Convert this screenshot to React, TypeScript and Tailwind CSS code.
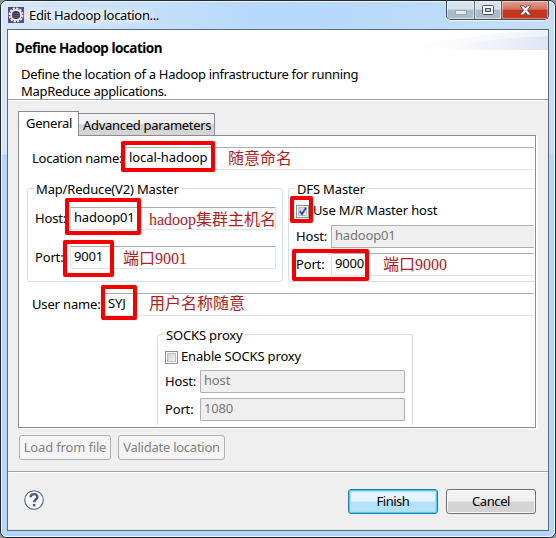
import { ReactNode } from "react";
import clsx from "clsx";

type FieldProps = {
  value: string;
  disabled?: boolean;
  open?: boolean;
  className?: string;
};

const Field = ({ value, disabled, open, className }: FieldProps) => (
  <div
    className={clsx(
      "flex h-[23px] items-center rounded-[1px] border pb-px pl-[3px] whitespace-nowrap",
      disabled
        ? "border-[#afafaf] bg-[#efefef] text-[#777]"
        : "border-[#e2e3ea] border-t-[#abadb3] bg-white",
      open && "border-r-0",
      className
    )}
  >
    {value}
  </div>
);

const Checkbox = ({ checked }: { checked?: boolean }) => (
  <div className="flex size-[13px] shrink-0 items-center justify-center border border-[#8e8f8f] bg-white">
    <div className="size-[9px] border border-[#b9bfc7] bg-linear-to-br from-[#cbd0d8] to-[#f6f6f6]">
      {checked && (
        <svg viewBox="0 0 9 9" className="-mt-px size-[9px] overflow-visible">
          <path
            d="M0.8 4.2 3 7 7 0.8"
            fill="none"
            stroke="#3b4c9b"
            strokeWidth="1.9"
          />
        </svg>
      )}
    </div>
  </div>
);

const Group = ({
  title,
  className,
  children,
}: {
  title: string;
  className?: string;
  children: ReactNode;
}) => (
  <div className={clsx("border border-[#d5dfe5]", className)}>
    <div className="-mt-[10px] ml-[6px] h-[20px] w-fit bg-white px-[2px] leading-[20px] whitespace-nowrap">
      {title}
    </div>
    {children}
  </div>
);

// red frame drawn over a field
const Mark = ({ className }: { className: string }) => (
  <div
    className={clsx(
      "absolute rounded-[2px] border-4 border-[#f40000] shadow-[0_0_1px_#ff7777]",
      className
    )}
  />
);

const Note = ({
  className,
  children,
}: {
  className: string;
  children: ReactNode;
}) => (
  <div
    className={clsx(
      "absolute font-['Liberation_Serif','Noto_Sans_CJK_SC',serif] text-[16px] leading-[20px] tracking-normal whitespace-nowrap text-[#b51c1c]",
      className
    )}
  >
    {children}
  </div>
);

const TitleBar = () => (
  <div className="flex h-[27px] shrink-0 items-start">
    <svg viewBox="0 0 16 16" className="mt-[5px] ml-[6px] size-4 shrink-0">
      <rect width="16" height="16" fill="#594a79" />
      <circle
        cx="8"
        cy="8"
        r="6.6"
        fill="none"
        stroke="#e8e8ec"
        strokeWidth="1.8"
        strokeDasharray="2.3 1.15"
      />
      <circle cx="8" cy="8" r="5" fill="#33304a" stroke="#eeeef2" strokeWidth="1.8" />
      <path d="M4.2 6.6h7.6M3.8 8.4h8.4M4.4 10.2h7.2" stroke="#6e6a8c" strokeWidth=".8" />
    </svg>
    <div className="mt-[3px] ml-[5px] leading-[20px] tracking-[-0.34px] [text-shadow:0_0_6px_white,0_0_8px_white,0_0_10px_white]">
      Edit Hadoop location...
    </div>
    <div className="-mt-px mr-[5px] ml-auto flex h-[19px] w-[103px] overflow-hidden rounded-b-[5px] border border-t-0 border-[#3f4a56] shadow-[0_1px_1px_#ffffffcc]">
      <div className="flex w-[28px] border-r border-[#66727f] bg-linear-to-b from-[#d6e2ec] from-45% to-[#aabccc] to-50% shadow-[inset_0_0_0_1px_#ffffff88]">
        <div className="mt-[9px] ml-[8px] h-[5px] w-[12px] rounded-[1px] border border-[#9aa5b1] bg-[#e6eaee]" />
      </div>
      <div className="flex w-[27px] border-r border-[#55616e] bg-linear-to-b from-[#d6e2ec] from-45% to-[#aabccc] to-50% shadow-[inset_0_0_0_1px_#ffffff88]">
        <svg viewBox="0 0 12 10" className="mt-[4px] ml-[7px] h-[10px] w-[12px]">
          <rect x=".5" y=".5" width="11" height="9" rx="1" fill="#f8f8f8" stroke="#4c5260" />
          <rect x="3.5" y="3.5" width="5" height="3" fill="#b8c6d4" stroke="#4c5260" />
        </svg>
      </div>
      <div className="flex flex-1 justify-center bg-linear-to-b from-[#e3a08f] via-[#d27460] via-45% to-[#c5371d] to-52% shadow-[inset_0_0_0_1px_#ffffff66]">
        <svg viewBox="0 0 13 11" className="mt-[4px] h-[11px] w-[13px]">
          <path
            d="M1 .8h3.6L6.5 3 8.4.8H12L8.5 5.2 12.2 10H8.5L6.5 7.4 4.5 10H.8l3.7-4.8z"
            fill="#fafafa"
            stroke="#5b4650"
            strokeWidth=".9"
          />
        </svg>
      </div>
    </div>
  </div>
);

const Header = () => (
  <div className="flex h-[70px] shrink-0 justify-between border-b border-[#a0a0a0] bg-white">
    <div className="flex flex-col whitespace-nowrap">
      <div className="mt-[8px] ml-[7px] text-[13.5px] leading-[20px] font-bold tracking-[-0.5px]">
        Define Hadoop location
      </div>
      <div className="mt-[8px] ml-[13px] leading-[17px] tracking-[-0.3px]">
        Define the location of a Hadoop infrastructure for running
        <br />
        MapReduce applications.
      </div>
    </div>
    <svg viewBox="0 0 150 20" className="-ml-[150px] h-[20px] w-[150px]">
      <defs>
        <linearGradient id="sweep">
          <stop offset=".1" stopColor="#fff" />
          <stop offset="1" stopColor="#dfe5f6" />
        </linearGradient>
      </defs>
      <path d="M0 20Q70 3 150 0V20z" fill="url(#sweep)" opacity=".5" />
      <path d="M30 20Q90 8 150 6V20z" fill="url(#sweep)" />
    </svg>
  </div>
);

const General = () => (
  <div className="relative flex h-[293px] w-[518px] flex-col overflow-hidden border border-[#898c95] bg-white shadow-[2px_1px_0_white]">
    <div className="mt-[11px] flex pr-px">
      <div className="w-[106px] shrink-0 pl-[13px] leading-[22px] tracking-[-0.25px] whitespace-nowrap">
        Location name:
      </div>
      <Field value="local-hadoop" open className="flex-1 tracking-[-0.08px]" />
    </div>
    <div className="mt-[18px] flex pr-px">
      <Group title="Map/Reduce(V2) Master" className="ml-[8px] h-[94px] w-[256px] rounded-[3px]">
        <div className="mt-[8px] flex">
          <div className="w-[42px] pl-[7px] leading-[22px]">Host:</div>
          <Field value="hadoop01" className="w-[206px]" />
        </div>
        <div className="mt-[16px] flex">
          <div className="w-[42px] pl-[7px] leading-[22px]">Port:</div>
          <Field value="9001" className="w-[206px]" />
        </div>
      </Group>
      <Group title="DFS Master" className="ml-[5px] h-[94px] flex-1 rounded-l-[3px] border-r-0">
        <div className="mt-[2px] ml-[7px] flex h-[20px] items-center gap-[4px]">
          <Checkbox checked />
          <span>Use M/R Master host</span>
        </div>
        <div className="mt-[4px] flex">
          <div className="w-[42px] pl-[7px] leading-[22px]">Host:</div>
          <Field value="hadoop01" disabled open className="flex-1" />
        </div>
        <div className="mt-[5px] flex">
          <div className="w-[42px] pl-[7px] leading-[22px]">Port:</div>
          <Field value="9000" open className="flex-1" />
        </div>
      </Group>
    </div>
    <div className="mt-[11px] flex pr-px">
      <div className="w-[85px] pl-[13px] leading-[22px]">User name:</div>
      <Field value="SYJ" open className="flex-1" />
    </div>
    <Group title="SOCKS proxy" className="mt-[18px] ml-[138px] h-[91px] w-[256px] rounded-t-[3px] border-b-0">
      <div className="mt-[2px] ml-[7px] flex h-[20px] items-center gap-[3px]">
        <Checkbox />
        <span>Enable SOCKS proxy</span>
      </div>
      <div className="mt-[3px] flex">
        <div className="w-[42px] pl-[7px] leading-[22px]">Host:</div>
        <Field value="host" disabled className="w-[205px]" />
      </div>
      <div className="mt-[5px] flex">
        <div className="w-[42px] pl-[7px] leading-[22px]">Port:</div>
        <Field value="1080" disabled className="w-[205px]" />
      </div>
    </Group>

    <Mark className="top-[5px] left-[102px] h-[31px] w-[94px]" />
    <Mark className="top-[62px] left-[46px] h-[37px] w-[76px]" />
    <Mark className="top-[104px] left-[44px] h-[37px] w-[51px]" />
    <Mark className="top-[60px] left-[271px] h-[27px] w-[23px]" />
    <Mark className="top-[113px] left-[273px] h-[32px] w-[77px]" />
    <Mark className="top-[149px] left-[82px] h-[35px] w-[36px]" />
    <Note className="top-[13px] left-[209px]">随意命名</Note>
    <Note className="top-[74px] left-[130px]">hadoop集群主机名</Note>
    <Note className="top-[113px] left-[104px]">端口9001</Note>
    <Note className="top-[119px] left-[364px]">端口9000</Note>
    <Note className="top-[158px] left-[130px]">用户名称随意</Note>
  </div>
);

const App = () => {
  return (
    <div className="h-[538px] w-[556px] bg-[#8b959c] font-['Noto_Sans',sans-serif] text-[13px] tracking-[-0.16px] text-black">
      <div className="flex h-full flex-col rounded-[7px] border border-[#232a35] bg-linear-to-b from-transparent from-[153px] to-[#b3d6fa] to-[154px] p-px shadow-[inset_0_0_0_1px_#f2f8ff]">
        <div className="-m-px flex flex-1 flex-col rounded-[6px] border border-[#eef6ff] bg-[linear-gradient(to_bottom,transparent_152px,#b3d6fa_153px),linear-gradient(to_right,#d6e7f8,#b5d8fb_50%,#c4def7)]">
          <TitleBar />
          <div className="mr-[5px] ml-[5px] flex h-[502px] flex-col border border-[#5c6b7a] bg-[#efefef]">
            <Header />
            <div className="flex h-[372px] shrink-0 flex-col border-t border-b border-t-white border-b-[#a0a0a0] pl-[10px]">
              <div className="relative z-10 mt-[10px] -mb-px flex items-end whitespace-nowrap">
                <div className="h-[25px] w-[61px] border border-b-0 border-[#898c95] bg-white pl-[7px] leading-[22px] tracking-[-0.25px]">
                  General
                </div>
                <div className="h-[23px] w-[136px] border border-l-0 border-[#898c95] bg-linear-to-b from-[#f2f2f2] from-45% to-[#d5d5d5] to-50% pl-[4px] leading-[22px] tracking-[-0.3px]">
                  Advanced parameters
                </div>
              </div>
              <General />
              <div className="mt-[7px] ml-px flex gap-[7px] text-[#838383]">
                <button className="h-[25px] w-[92px] rounded-[3px] border border-[#adb2b5] bg-[#f4f4f4] pt-px whitespace-nowrap">
                  Load from file
                </button>
                <button className="h-[25px] w-[107px] rounded-[3px] border border-[#adb2b5] bg-[#f4f4f4] pt-px tracking-[-0.25px] whitespace-nowrap">
                  Validate location
                </button>
              </div>
            </div>
            <div className="flex flex-1 items-start border-t border-white pt-[16px]">
              <svg viewBox="0 0 20 20" className="mt-px ml-[16px] size-5">
                <circle cx="10" cy="10" r="9.3" fill="#f5f7fa" stroke="#566580" strokeWidth="1.1" />
                <path
                  d="M6.6 7.2C6.8 3.2 13.5 3.2 13.4 7c0 2.5-3.3 2.6-3.3 5.2"
                  fill="none"
                  stroke="#4c5b7c"
                  strokeWidth="2.4"
                />
                <rect x="8.9" y="14" width="2.4" height="2.4" fill="#4c5b7c" />
              </svg>
              <button className="ml-auto h-[25px] w-[90px] rounded-[3px] border border-[#2c79a8] bg-linear-to-b from-[#e6f5fd] from-45% to-[#b5e2f8] to-55% pt-px tracking-[-0.5px] shadow-[inset_0_0_0_1px_#48cdf5,inset_0_0_1px_2px_#a5e4fa]">
                Finish
              </button>
              <button className="mr-[12px] ml-[8px] h-[25px] w-[90px] rounded-[3px] border border-[#707070] bg-linear-to-b from-[#f1f1f1] from-45% to-[#d4d4d4] to-55% pt-px tracking-[-0.4px] shadow-[inset_0_0_0_1px_#fafafa]">
                Cancel
              </button>
            </div>
          </div>
        </div>
      </div>
    </div>
  );
};

export default App;
